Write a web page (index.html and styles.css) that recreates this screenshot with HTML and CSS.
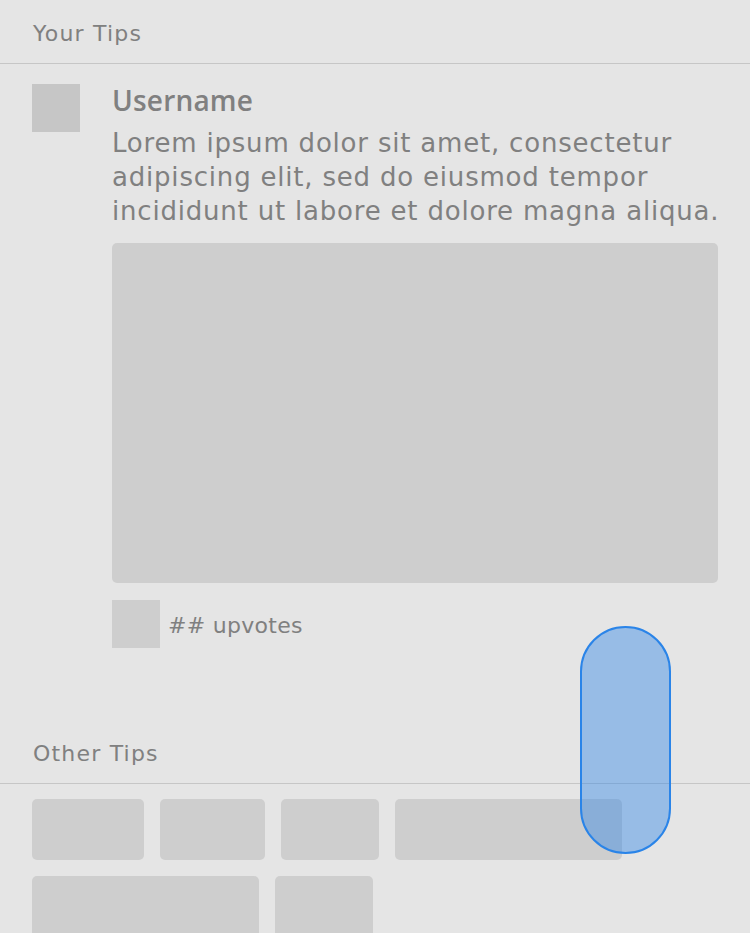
FILE: index.html
```html
<!DOCTYPE html>
<html>
<head>
<meta charset="utf-8">
<link rel="stylesheet" href="styles.css">
</head>
<body>
<div class="page">
  <div class="section-head">Your Tips</div>
  <div class="tip">
    <div class="avatar"></div>
    <div class="tip-body">
      <div class="username">Username</div>
      <p class="tip-text">Lorem ipsum dolor sit amet, consectetur adipiscing elit, sed do eiusmod tempor incididunt ut labore et dolore magna aliqua.</p>
      <div class="tip-image"></div>
      <div class="votes">
        <div class="vote-btn"></div>
        <span class="vote-count">## upvotes</span>
      </div>
    </div>
  </div>
  <div class="section-head other">Other Tips</div>
  <div class="chips">
    <div class="chip" style="width:112px"></div>
    <div class="chip" style="width:105px"></div>
    <div class="chip" style="width:98px"></div>
    <div class="chip" style="width:227px"></div>
    <div class="chip" style="width:227px"></div>
    <div class="chip" style="width:98px"></div>
  </div>
  <div class="touch"></div>
</div>
</body>
</html>
```
FILE: styles.css
```css
html, body {
  margin: 0;
  padding: 0;
  background: #e5e5e5;
}
.page {
  position: relative;
  width: 750px;
  height: 933px;
  overflow: hidden;
  font-family: "DejaVu Sans", sans-serif;
  color: #808080;
}
.section-head {
  box-sizing: border-box;
  height: 64px;
  display: flex;
  align-items: center;
  padding: 3px 0 0 33px;
  font-size: 22px;
  letter-spacing: 1.2px;
  color: #808080;
  border-bottom: 1px solid #c6c6c6;
}
.section-head.other {
  margin-top: 73px;
  height: 63px;
  padding-top: 2px;
}
.tip {
  display: flex;
  gap: 32px;
  padding: 20px 32px 0 32px;
}
.avatar {
  flex: none;
  width: 48px;
  height: 48px;
  background: #c6c6c6;
}
.tip-body {
  flex: 1;
  display: flex;
  flex-direction: column;
}
.username {
  font-family: "Open Sans", sans-serif;
  font-size: 28px;
  font-weight: 600;
  letter-spacing: 0.2px;
  line-height: 32px;
  color: #808080;
}
.tip-text {
  margin: 10px -12px 0 0;
  font-size: 26px;
  letter-spacing: 0.8px;
  line-height: 34px;
  color: #808080;
}
.tip-image {
  margin-top: 15px;
  height: 340px;
  background: #cecece;
  border-radius: 5px;
}
.votes {
  margin-top: 17px;
  display: flex;
  align-items: center;
  gap: 8px;
}
.vote-btn {
  width: 48px;
  height: 48px;
  background: #cecece;
}
.vote-count {
  font-size: 22px;
  letter-spacing: 0.3px;
  padding-top: 2px;
  color: #808080;
}
.chips {
  display: flex;
  flex-wrap: wrap;
  gap: 16px;
  padding: 15px 32px 0 32px;
  width: 620px;
}
.chip {
  height: 61px;
  background: #cecece;
  border-radius: 5px;
}
.touch {
  position: absolute;
  left: 580px;
  top: 626px;
  width: 87px;
  height: 224px;
  border: 2px solid #2a84e8;
  border-radius: 46px;
  background: rgba(42, 132, 232, 0.42);
}
```
